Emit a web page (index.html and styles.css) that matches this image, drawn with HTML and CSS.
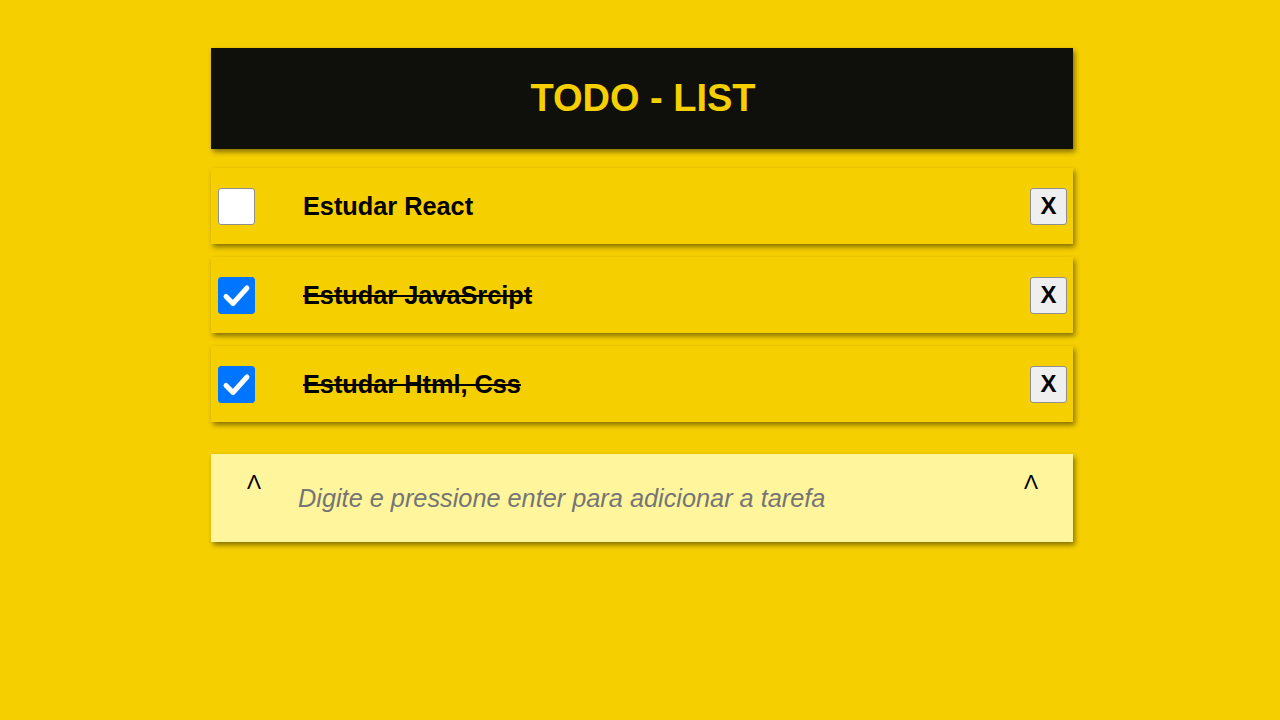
FILE: index.html
```html
<!DOCTYPE html>
<html lang="pt-BR">
<head>
<meta charset="utf-8">
<title>Todo List</title>
<link rel="stylesheet" href="styles.css">
</head>
<body>
<main class="app">
  <header class="header">
    <h1 class="title">TODO - LIST</h1>
  </header>
  <ul class="list">
    <li class="item">
      <span class="check"></span>
      <span class="label">Estudar React</span>
      <button class="remove" type="button">X</button>
    </li>
    <li class="item">
      <span class="check checked"><svg viewBox="0 0 37 37" width="37" height="37"><path d="M8 19.5 L15 26.5 L29 11" fill="none" stroke="#fff" stroke-width="5" stroke-linecap="round" stroke-linejoin="round"/></svg></span>
      <span class="label done">Estudar JavaSrcipt</span>
      <button class="remove" type="button">X</button>
    </li>
    <li class="item">
      <span class="check checked"><svg viewBox="0 0 37 37" width="37" height="37"><path d="M8 19.5 L15 26.5 L29 11" fill="none" stroke="#fff" stroke-width="5" stroke-linecap="round" stroke-linejoin="round"/></svg></span>
      <span class="label done">Estudar Html, Css</span>
      <button class="remove" type="button">X</button>
    </li>
  </ul>
  <div class="new-task">
    <span class="caret caret-left">Λ</span>
    <input class="input" type="text" placeholder="Digite e pressione enter para adicionar a tarefa">
    <span class="caret caret-right">Λ</span>
  </div>
</main>
</body>
</html>
```

FILE: styles.css
```css
* {
  box-sizing: border-box;
}

html, body {
  margin: 0;
  padding: 0;
  height: 100%;
}

body {
  background: #f5cf00;
  font-family: "Liberation Sans", Arial, sans-serif;
  padding-left: 4px;
}

.app {
  width: 862px;
  margin: 48px auto 0;
}

.header {
  height: 101px;
  background: #0f100c;
  display: flex;
  align-items: center;
  justify-content: center;
  box-shadow: 2px 3px 5px rgba(0, 0, 0, 0.45);
}

.title {
  margin: 0;
  color: #f5cf00;
  font-size: 38px;
  font-weight: bold;
  padding-left: 2px;
}

.list {
  list-style: none;
  margin: 19px 0 0;
  padding: 0;
  display: flex;
  flex-direction: column;
  gap: 13px;
}

.item {
  height: 76px;
  display: flex;
  align-items: center;
  background: #f5cf00;
  box-shadow: 2px 3px 5px rgba(0, 0, 0, 0.45);
  padding: 0 6px 0 7px;
}

.check {
  width: 37px;
  height: 37px;
  flex: none;
  background: #fff;
  border: 1px solid #8f8f8f;
  border-radius: 3px;
  display: flex;
}

.check.checked {
  background: #0075ff;
  border-color: #0075ff;
}

.check svg {
  display: block;
  margin: -1px;
}

.label {
  flex: 1;
  margin-left: 48px;
  font-size: 25.3px;
  font-weight: bold;
  color: #000;
}

.label.done {
  text-decoration: line-through;
  text-decoration-thickness: 2px;
}

.remove {
  width: 37px;
  height: 37px;
  flex: none;
  padding: 0;
  background: #efefef;
  border: 1px solid #8f8f8f;
  border-radius: 3px;
  font-family: "Liberation Sans", Arial, sans-serif;
  font-size: 24px;
  font-weight: bold;
  color: #000;
  line-height: 1;
}

.new-task {
  margin-top: 32px;
  height: 88px;
  background: #fff59d;
  box-shadow: 2px 3px 5px rgba(0, 0, 0, 0.45);
  display: flex;
  align-items: center;
}

.caret {
  align-self: flex-start;
  margin-top: 17px;
  font-size: 21px;
  color: #000;
  line-height: 1;
  flex: none;
}

.caret-left {
  margin-left: 36px;
}

.caret-right {
  margin-right: 35px;
}

.input {
  flex: 1;
  margin-left: 37px;
  border: none;
  background: transparent;
  outline: none;
  font-family: "Liberation Sans", Arial, sans-serif;
  font-size: 25.3px;
  font-style: italic;
  color: #000;
  padding: 0;
}

.input::placeholder {
  color: #757575;
}
```
